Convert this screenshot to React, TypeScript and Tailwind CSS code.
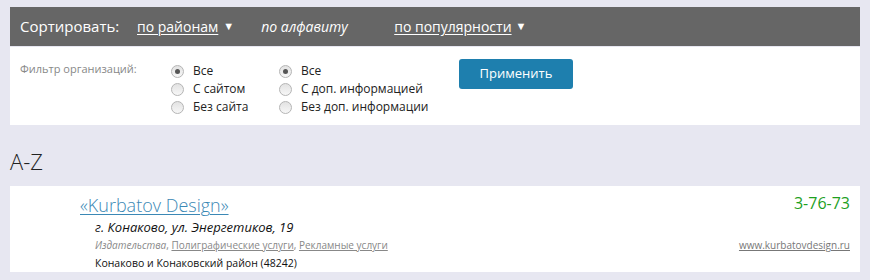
import React from "react";

function Radio({ checked }: { checked?: boolean }) {
    return (
        <span className="w-[13px] h-[13px] rounded-full border border-[#b5b5b5] bg-gradient-to-b from-[#e2e2e2] to-[#f7f7f7] flex items-center justify-center shrink-0">
            {checked && <span className="w-[5px] h-[5px] rounded-full bg-[#555]" />}
        </span>
    );
}

function RadioGroup({ items }: { items: string[] }) {
    return (
        <div className="flex flex-col">
            {items.map((label, i) => (
                <label key={label} className="flex items-center gap-[9px] h-[18px] text-[12px] text-[#222]">
                    <Radio checked={i === 0} />
                    <span>{label}</span>
                </label>
            ))}
        </div>
    );
}

export default function App() {
    const font = { fontFamily: "'Open Sans', 'Noto Sans', sans-serif" };

    return (
        <div className="w-[870px] h-[280px] bg-[#e7e7f1] pt-[7px] px-[10px] overflow-hidden" style={font}>
            {/* сортировка */}
            <div className="h-[39px] bg-[#666666] flex items-center pl-[10px] text-white text-[15px]">
                <span className="w-[117px]">Сортировать:</span>
                <a className="underline underline-offset-2 text-[14px]">по районам</a>
                <span className="ml-[5px] text-[11px]">▼</span>
                <span className="ml-[27px] italic w-[133px] text-[14px]">по алфавиту</span>
                <a className="underline underline-offset-2 text-[14px]">по популярности</a>
                <span className="ml-[4px] text-[11px]">▼</span>
            </div>

            {/* фильтр */}
            <div className="mt-px h-[78px] bg-white flex pl-[10px] pt-[15px]">
                <div className="w-[151px] text-[11px] text-[#888] leading-[16px] -mt-[1px]">Фильтр организаций:</div>
                <div className="w-[108px]">
                    <RadioGroup items={["Все", "С сайтом", "Без сайта"]} />
                </div>
                <div className="w-[180px]">
                    <RadioGroup items={["Все", "С доп. информацией", "Без доп. информации"]} />
                </div>
                <button className="-mt-[3px] w-[114px] h-[30px] rounded-[3px] bg-[#1e7fae] text-white text-[13px]">
                    Применить
                </button>
            </div>

            <h2 className="mt-[21px] h-[40px] text-[22px] font-light text-[#222] leading-[30px]">A-Z</h2>

            {/* карточка */}
            <div className="h-[86px] bg-white flex justify-between pl-[70px] pr-[10px] pt-[6px]">
                <div className="flex flex-col">
                    <a className="text-[18px] font-light leading-[26px] text-[#3b88b5] underline underline-offset-2 decoration-1">«Kurbatov Design»</a>
                    <div className="pl-[15px] italic text-[13px] text-[#111] leading-[19px]">г. Конаково, ул. Энергетиков, 19</div>
                    <div className="pl-[15px] text-[10px] leading-[16px] text-[#888]">
                        <span className="italic">Издательства</span>,{" "}
                        <a className="underline">Полиграфические услуги</a>,{" "}
                        <a className="underline">Рекламные услуги</a>
                    </div>
                    <div className="pl-[15px] text-[10.5px] leading-[20px] text-[#111]">Конаково и Конаковский район (48242)</div>
                </div>
                <div className="flex flex-col items-end">
                    <div className="text-[16px] leading-[22px] text-[#1ea01e]">3-76-73</div>
                    <a className="mt-[24px] text-[10px] text-[#777] underline">www.kurbatovdesign.ru</a>
                </div>
            </div>
        </div>
    );
}
